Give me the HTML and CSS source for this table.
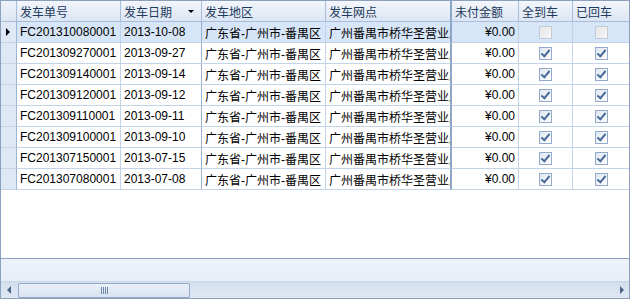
FILE: index.html
```html
<!DOCTYPE html>
<html>
<head>
<meta charset="utf-8">
<link rel="stylesheet" href="styles.css">
</head>
<body>
<div class="grid">
  <div class="body">
    <div class="row head">
      <div class="c rh"></div>
      <div class="c c1">发车单号</div>
      <div class="c c2">发车日期<span class="sort"></span></div>
      <div class="c c3">发车地区</div>
      <div class="c c4">发车网点</div>
      <div class="c c5">未付金额</div>
      <div class="c c6">全到车</div>
      <div class="c c7">已回车</div>
    </div>
    <div class="row sel">
      <div class="c rh"><span class="cur"></span></div>
      <div class="c c1">FC201310080001</div>
      <div class="c c2">2013-10-08</div>
      <div class="c c3">广东省-广州市-番禺区</div>
      <div class="c c4">广州番禺市桥华圣营业厅</div>
      <div class="c c5 num">¥0.00</div>
      <div class="c c6 ck"><span class="box off"></span></div>
      <div class="c c7 ck"><span class="box off"></span></div>
    </div>
    <div class="row">
      <div class="c rh"></div>
      <div class="c c1">FC201309270001</div>
      <div class="c c2">2013-09-27</div>
      <div class="c c3">广东省-广州市-番禺区</div>
      <div class="c c4">广州番禺市桥华圣营业厅</div>
      <div class="c c5 num">¥0.00</div>
      <div class="c c6 ck"><span class="box on"></span></div>
      <div class="c c7 ck"><span class="box on"></span></div>
    </div>
    <div class="row">
      <div class="c rh"></div>
      <div class="c c1">FC201309140001</div>
      <div class="c c2">2013-09-14</div>
      <div class="c c3">广东省-广州市-番禺区</div>
      <div class="c c4">广州番禺市桥华圣营业厅</div>
      <div class="c c5 num">¥0.00</div>
      <div class="c c6 ck"><span class="box on"></span></div>
      <div class="c c7 ck"><span class="box on"></span></div>
    </div>
    <div class="row">
      <div class="c rh"></div>
      <div class="c c1">FC201309120001</div>
      <div class="c c2">2013-09-12</div>
      <div class="c c3">广东省-广州市-番禺区</div>
      <div class="c c4">广州番禺市桥华圣营业厅</div>
      <div class="c c5 num">¥0.00</div>
      <div class="c c6 ck"><span class="box on"></span></div>
      <div class="c c7 ck"><span class="box on"></span></div>
    </div>
    <div class="row">
      <div class="c rh"></div>
      <div class="c c1">FC201309110001</div>
      <div class="c c2">2013-09-11</div>
      <div class="c c3">广东省-广州市-番禺区</div>
      <div class="c c4">广州番禺市桥华圣营业厅</div>
      <div class="c c5 num">¥0.00</div>
      <div class="c c6 ck"><span class="box on"></span></div>
      <div class="c c7 ck"><span class="box on"></span></div>
    </div>
    <div class="row">
      <div class="c rh"></div>
      <div class="c c1">FC201309100001</div>
      <div class="c c2">2013-09-10</div>
      <div class="c c3">广东省-广州市-番禺区</div>
      <div class="c c4">广州番禺市桥华圣营业厅</div>
      <div class="c c5 num">¥0.00</div>
      <div class="c c6 ck"><span class="box on"></span></div>
      <div class="c c7 ck"><span class="box on"></span></div>
    </div>
    <div class="row">
      <div class="c rh"></div>
      <div class="c c1">FC201307150001</div>
      <div class="c c2">2013-07-15</div>
      <div class="c c3">广东省-广州市-番禺区</div>
      <div class="c c4">广州番禺市桥华圣营业厅</div>
      <div class="c c5 num">¥0.00</div>
      <div class="c c6 ck"><span class="box on"></span></div>
      <div class="c c7 ck"><span class="box on"></span></div>
    </div>
    <div class="row">
      <div class="c rh"></div>
      <div class="c c1">FC201307080001</div>
      <div class="c c2">2013-07-08</div>
      <div class="c c3">广东省-广州市-番禺区</div>
      <div class="c c4">广州番禺市桥华圣营业厅</div>
      <div class="c c5 num">¥0.00</div>
      <div class="c c6 ck"><span class="box on"></span></div>
      <div class="c c7 ck"><span class="box on"></span></div>
    </div>
  </div>
  <div class="footer"></div>
  <div class="hscroll">
    <span class="arrow left"></span>
    <div class="track">
      <div class="thumb"><span class="grip"></span></div>
    </div>
    <span class="arrow right"></span>
  </div>
</div>
</body>
</html>
```

FILE: styles.css
```css
html, body {
  margin: 0;
  padding: 0;
  background: #ffffff;
}
.grid {
  width: 630px;
  height: 299px;
  box-sizing: border-box;
  border: 1px solid #8ba1be;
  display: flex;
  flex-direction: column;
  font-family: "Liberation Sans", "Noto Sans CJK SC", sans-serif;
  font-size: 12px;
  color: #000;
}
.body {
  flex: 1;
  background: #fff;
  overflow: hidden;
}
.row {
  display: flex;
  height: 21px;
}
.c {
  box-sizing: border-box;
  height: 21px;
  border-right: 1px solid #c3d3e8;
  border-bottom: 1px solid #c3d3e8;
  padding: 0 3px;
  display: flex;
  align-items: center;
  white-space: nowrap;
  overflow: hidden;
  position: relative;
}
.rh { width: 16px; background: #dfe8f5; border-right-color: #9fb5d2; border-bottom-color: #c3d3e8; padding: 0; }
.c1 { width: 104px; }
.c2 { width: 81px; border-right-color: #9cb1cd; }
.c3 { width: 124px; }
.c4 { width: 126px; border-right: 2px solid #8ea6c6; }
.c5 { width: 67px; }
.c6 { width: 54px; }
.c7 { width: 56px; border-right: none; }

.head .c {
  background: linear-gradient(#f3f6fb, #e6edf7 55%, #dbe5f3);
  color: #1e395b;
  border-right-color: #a9bdd8;
  border-bottom-color: #a9bdd8;
}
.head .c4 { border-right-color: #8ea6c6; }
.head .rh { background: linear-gradient(#eef3fa, #dce6f3); }

.sort {
  position: absolute;
  right: 7px;
  top: 9px;
  width: 0;
  height: 0;
  border-left: 3px solid transparent;
  border-right: 3px solid transparent;
  border-top: 3px solid #000;
}

.sel .c { background: #d7e5f8; }
.sel .rh { background: #dfe8f5; }
.cur {
  position: absolute;
  left: 5px;
  top: 6px;
  width: 0;
  height: 0;
  border-top: 4px solid transparent;
  border-bottom: 4px solid transparent;
  border-left: 4px solid #000;
}

.num { justify-content: flex-end; }
.ck { justify-content: center; }
.box {
  width: 13px;
  height: 13px;
  box-sizing: border-box;
  border: 1px solid #94aacb;
  background: linear-gradient(135deg, #dfe6f0, #ffffff);
  position: relative;
}
.box.off {
  border-color: #c4cbd6;
  background: linear-gradient(135deg, #e6e6e6, #f6f6f6);
}
.box.on::after {
  content: "";
  position: absolute;
  left: 3px;
  top: 0px;
  width: 3px;
  height: 7px;
  border-right: 2px solid #4a6c9b;
  border-bottom: 2px solid #4a6c9b;
  transform: rotate(40deg);
}

.footer {
  height: 23px;
  box-sizing: border-box;
  border-top: 1px solid #8ba1be;
  background: linear-gradient(#eef3fa, #e6eef8);
}
.hscroll {
  height: 17px;
  display: flex;
  align-items: center;
  background: linear-gradient(#d4dfee, #dfe7f3);
  border-top: 1px solid #c9d6e8;
  box-sizing: border-box;
}
.track {
  flex: 1;
  height: 15px;
  display: flex;
  align-items: center;
}
.thumb {
  width: 172px;
  height: 15px;
  box-sizing: border-box;
  border: 1px solid #93a9c8;
  border-radius: 2px;
  background: linear-gradient(#eaf0f8, #d9e3f1);
  display: flex;
  align-items: center;
  justify-content: center;
}
.grip {
  width: 7px;
  height: 7px;
  background: repeating-linear-gradient(90deg, #6d87ab 0 1px, transparent 1px 2px);
}
.arrow {
  width: 0;
  height: 0;
  border-top: 4px solid transparent;
  border-bottom: 4px solid transparent;
}
.arrow.left {
  border-right: 4px solid #4e6486;
  margin: 0 7px 0 6px;
}
.arrow.right {
  border-left: 4px solid #4e6486;
  margin: 0 5px 0 7px;
}
```
